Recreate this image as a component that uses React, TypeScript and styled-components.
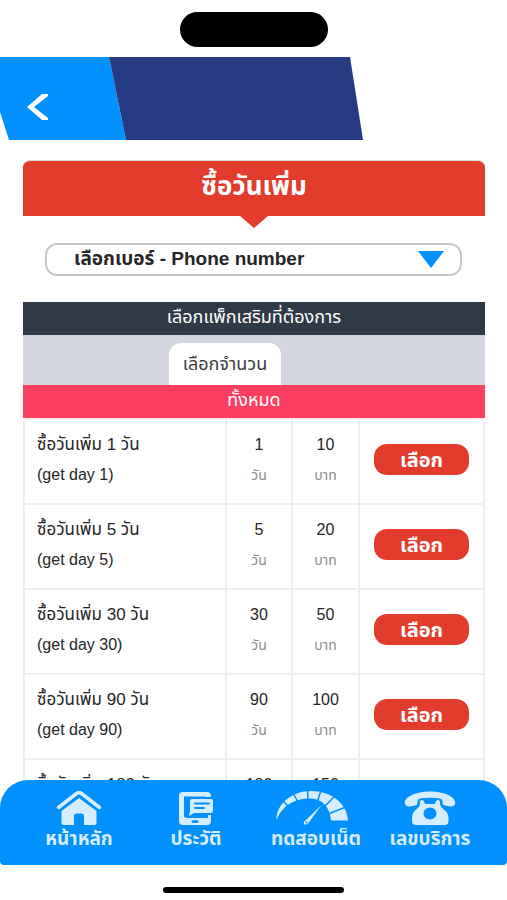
import React from "react";
import styled, { createGlobalStyle } from "styled-components";

const sans = `"Liberation Sans", "Noto Sans Thai", "Noto Sans", sans-serif`;

const GlobalStyle = createGlobalStyle`
  *, *::before, *::after { box-sizing: border-box; }
  body { margin: 0; background: #fff; font-family: ${sans}; color: #262626; }
  button, select { font: inherit; color: inherit; border: 0; margin: 0; padding: 0; cursor: pointer; }
`;

const Screen = styled.div`
  display: flex;
  flex-direction: column;
  height: 100vh;
  overflow: hidden;
  background: #fff;
`;

const StatusBar = styled.div`
  flex: none;
  display: flex;
  justify-content: center;
  padding: 12px 0 10px;
`;

const Island = styled.div`
  width: 148px;
  height: 35px;
  border-radius: 18px;
  background: #000;
`;

const Header = styled.header`
  flex: none;
  display: flex;
  width: 72%;
  height: 83px;
`;

const BackButton = styled.button`
  flex: none;
  width: 126px;
  background: #0091ff;
  clip-path: polygon(0 0, 109px 0, 100% 100%, 9px 100%, 0 55px);
  display: flex;
  align-items: center;
  padding: 16px 0 0 27px;
`;

const HeaderPanel = styled.div`
  flex: 1;
  margin-left: -17px;
  margin-right: 2px;
  background: #263a84;
  clip-path: polygon(0 0, calc(100% - 13px) 0, 100% 100%, 17px 100%);
`;

const Content = styled.main`
  flex: 1;
  min-height: 0;
  overflow-y: auto;
  scrollbar-width: none;
  padding: 20px 22px 40px 23px;
`;

const Title = styled.h1`
  margin: 0;
  height: 56px;
  border-top: 1px solid #d9d9de;
  border-radius: 7px 7px 0 0;
  background: #e33c2c;
  color: #fff;
  font-size: 26px;
  font-weight: 700;
  line-height: 50px;
  text-align: center;
`;

const TitleNotch = styled.div`
  width: 28px;
  height: 12px;
  margin: 0 auto;
  background: #e33c2c;
  clip-path: polygon(0 0, 100% 0, 50% 100%);
`;

const PhoneField = styled.label`
  display: flex;
  align-items: center;
  height: 33px;
  margin: 15px 23px 26px 22px;
  padding-right: 16px;
  border: 2px solid #c8c8c8;
  border-radius: 12px;
  background: #fff;
`;

const PhoneSelect = styled.select`
  flex: 1;
  min-width: 0;
  height: 29px;
  margin-right: -26px;
  padding: 0 26px 2px 27px;
  appearance: none;
  outline: none;
  background: transparent;
  font-size: 19px;
  font-weight: 700;
`;

const SelectArrow = styled.svg`
  flex: none;
  width: 26px;
  height: 17px;
  pointer-events: none;
`;

const Band = styled.h2<{ $tone: string }>`
  margin: 0;
  height: 33px;
  background: ${(p) => p.$tone};
  color: #fff;
  font-size: 18px;
  font-weight: 400;
  line-height: 30px;
  text-align: center;
`;

const TabStrip = styled.div`
  display: flex;
  align-items: flex-end;
  height: 50px;
  padding-left: 146px;
  background: #d3d6df;
`;

const Tab = styled.button`
  width: 112px;
  height: 42px;
  border-radius: 12px 12px 0 0;
  background: #fff;
  color: #3c3c3c;
  font-size: 18px;
`;

const PackageTable = styled.table`
  width: 100%;
  table-layout: fixed;
  border-collapse: collapse;
`;

const Cell = styled.td<{ $align?: string }>`
  height: 85px;
  padding: 0 0 4px ${(p) => (p.$align ? "0" : "12px")};
  border: 2px solid #efefef;
  text-align: ${(p) => p.$align ?? "left"};
  vertical-align: middle;
`;

const Line = styled.div<{ $size?: number }>`
  font-size: ${(p) => p.$size ?? 16}px;
  line-height: 30px;
  white-space: nowrap;
`;

const Unit = styled.div`
  color: #8c8c8c;
  font-size: 14px;
  line-height: 30px;
`;

const ChooseButton = styled.button`
  width: 95px;
  height: 31px;
  border-radius: 13px;
  background: #e33c2c;
  color: #fff;
  font-size: 20px;
  font-weight: 700;
  line-height: 28px;
`;

const BottomNav = styled.nav`
  flex: none;
  position: relative;
  display: grid;
  grid-template-columns: 118fr 116fr 124fr 104fr;
  height: 85px;
  margin-top: -30px;
  padding: 10px 25px 0 20px;
  border-radius: 28px 28px 4px 4px;
  background: #0091ff;
`;

const NavItem = styled.a`
  display: flex;
  flex-direction: column;
  align-items: center;
  color: #d6ecff;
  font-size: 19px;
  font-weight: 700;
  line-height: 26px;
  text-decoration: none;
  white-space: nowrap;

  svg { display: block; height: 36px; fill: #d6ecff; }
`;

const HomeBar = styled.div`
  flex: none;
  display: flex;
  justify-content: center;
  padding: 22px 0 7px;

  &::before {
    content: "";
    width: 181px;
    height: 6px;
    border-radius: 3px;
    background: #000;
  }
`;

const HomeIcon = () => (
  <svg width="46" height="36" viewBox="0 0 46 36" aria-hidden="true">
    <path d="M2.5 17.5 L20.5 3.500 Q23 1.700 25.500 3.500 L43.500 17.500" fill="none" stroke="#d6ecff" strokeWidth="3.500" strokeLinecap="round" />
    <path d="M23 8 L40.500 21 V33 Q40.500 35 38.500 35 H28 V26 Q28 23.500 25.500 23.500 H20.500 Q18 23.500 18 26 V35 H7.500 Q5.500 35 5.500 33 V21 Z" />
  </svg>
);

const HistoryIcon = () => (
  <svg width="36" height="36" viewBox="0 0 36 36" aria-hidden="true">
    <path d="M4 2 H29 Q33 2 33 6 V7 H7.500 V28 H30 V25 H33 V31 Q33 35 29 35 H5 Q1 35 1 31 V6 Q1 2 5 2 Z" />
    <path d="M6 6.500 H28 V27 H6 Z" fill="#0091ff" />
    <path d="M14 9 H33 Q35 9 35 11 V21 Q35 23 33 23 H16 L11 26 L12 21 V11 Q12 9 14 9 Z" />
    <path d="M17 13.500 H31 M17 18 H26" stroke="#0091ff" strokeWidth="2" strokeLinecap="round" />
    <ellipse cx="17" cy="31.500" rx="3.500" ry="1.500" fill="#0091ff" />
  </svg>
);

const GaugeIcon = () => (
  <svg width="82" height="36" viewBox="0 0 82 36" aria-hidden="true">
    <path d="M1.500 30 C1 14 17 1 36 1 C56 1 72 13 73 30.500 H56 C55 17 47 9 36 8.500 C21 8 7 15 1.500 30 Z" />
    <path d="M7 10 L13 16 M18 3 L23 12 M32.500 0 L33 10 M46 0 L42 13 M60 6 L48 18 M71 17 L53 24" stroke="#0091ff" strokeWidth="1.500" />
    <path d="M46.500 15 L33.500 33 Q31 36 29 34 Q28 32 30.500 30.500 Z" />
    <circle cx="31.500" cy="32.500" r="1" fill="#0091ff" />
  </svg>
);

const PhoneIcon = () => (
  <svg width="52" height="36" viewBox="0 0 52 36" aria-hidden="true">
    <path d="M26 1.500 C10 1.500 -1 8 1 14 Q2 17 6 16.500 L11 15.500 Q14 15 13.500 11.500 Q13.500 9 16 8.500 Q26 7 36 8.500 Q38.500 9 38.500 11.500 Q38 15 41 15.500 L46 16.500 Q50 17 51 14 C53 8 42 1.500 26 1.500 Z" />
    <path fillRule="evenodd" d="M16 12 Q16 10 18 10 Q20 10 20.500 13 Q21 14 22.500 14 H29.500 Q31 14 31.500 13 Q32 10 34 10 Q36 10 36 12 V14 Q36.500 17 41 20.500 Q44.500 23.500 44.500 28 V31 Q44.500 35 40.500 35 H12 Q8 35 8 31 V28 Q8 23.500 11 20.500 Q15.500 17 16 14 Z M26 17.500 A6.500 6 0 1 0 26 29.500 A6.500 6 0 1 0 26 17.500 Z" />
  </svg>
);

const packages = [
  { days: 1, price: 10 },
  { days: 5, price: 20 },
  { days: 30, price: 50 },
  { days: 90, price: 100 },
  { days: 180, price: 150 },
];

const links = [
  { label: "หน้าหลัก", Icon: HomeIcon },
  { label: "ประวัติ", Icon: HistoryIcon },
  { label: "ทดสอบเน็ต", Icon: GaugeIcon },
  { label: "เลขบริการ", Icon: PhoneIcon },
];

export default function App() {
  return (
    <Screen lang="th">
      <GlobalStyle />
      <StatusBar>
        <Island />
      </StatusBar>
      <Header>
        <BackButton type="button" aria-label="ย้อนกลับ">
          <svg width="21" height="26" viewBox="0 0 21 26" aria-hidden="true">
            <path d="M21 0 H15 L0 13 L15 26 H21 V24 L7 13 L21 2 Z" fill="#fff" />
          </svg>
        </BackButton>
        <HeaderPanel />
      </Header>
      <Content>
        <Title>ซื้อวันเพิ่ม</Title>
        <TitleNotch />
        <PhoneField>
          <PhoneSelect aria-label="Phone number" defaultValue="">
            <option value="">เลือกเบอร์ - Phone number</option>
          </PhoneSelect>
          <SelectArrow viewBox="0 0 26 17" aria-hidden="true">
            <path d="M0 0 H26 L13 17 Z" fill="#0091ff" />
          </SelectArrow>
        </PhoneField>
        <Band $tone="#303a46">เลือกแพ็กเสริมที่ต้องการ</Band>
        <TabStrip role="tablist">
          <Tab type="button" role="tab" aria-selected="true">เลือกจำนวน</Tab>
        </TabStrip>
        <Band $tone="#fc3e60">ทั้งหมด</Band>
        <PackageTable>
          <colgroup>
            <col />
            <col width="66" />
            <col width="67" />
            <col width="125" />
          </colgroup>
          <tbody>
            {packages.map(({ days, price }) => (
              <tr key={days}>
                <Cell>
                  <Line $size={17}>ซื้อวันเพิ่ม {days} วัน</Line>
                  <Line>(get day {days})</Line>
                </Cell>
                <Cell $align="center">
                  <Line>{days}</Line>
                  <Unit>วัน</Unit>
                </Cell>
                <Cell $align="center">
                  <Line>{price}</Line>
                  <Unit>บาท</Unit>
                </Cell>
                <Cell $align="center">
                  <ChooseButton type="button">เลือก</ChooseButton>
                </Cell>
              </tr>
            ))}
          </tbody>
        </PackageTable>
      </Content>
      <BottomNav>
        {links.map(({ label, Icon }) => (
          <NavItem key={label} href="#">
            <Icon />
            {label}
          </NavItem>
        ))}
      </BottomNav>
      <HomeBar />
    </Screen>
  );
}
